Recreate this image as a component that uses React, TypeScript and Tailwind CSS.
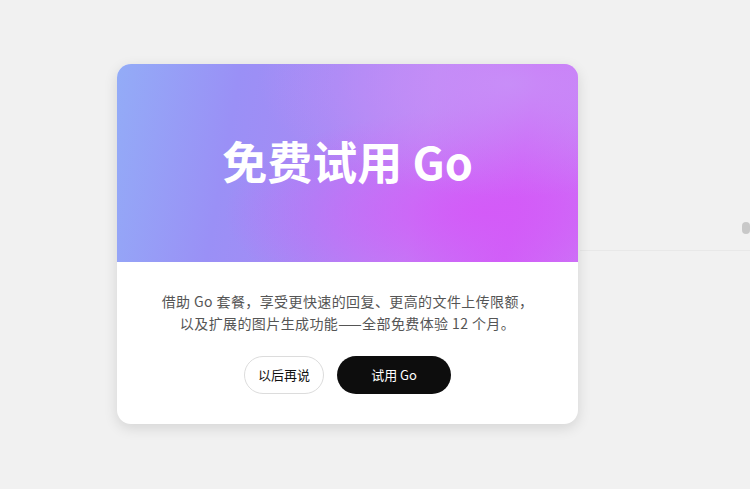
const App = () => {
  return (
    <div className="relative h-[489px] w-[750px] overflow-hidden bg-[#f1f1f1] font-['Noto_Sans_CJK_SC','Noto_Sans',sans-serif]">
      {/* faint backdrop behind the modal */}
      <div className="absolute left-[580px] top-[250px] h-px w-[170px] bg-[#e8e8e8]" />
      <div className="absolute left-[742px] top-[222px] h-[12px] w-[8px] rounded-full bg-[#c8c8c8]" />

      <div className="relative ml-[117px] mt-[64px] w-[461px] overflow-hidden rounded-[14px] bg-white shadow-[0_4px_14px_rgba(0,0,0,0.12)]">
        <div className="flex h-[198px] items-center justify-center bg-[radial-gradient(ellipse_at_85%_10%,rgba(200,145,248,0.9)_0%,rgba(200,145,248,0)_45%),radial-gradient(ellipse_at_80%_75%,rgba(212,90,248,0.95)_0%,rgba(212,90,248,0)_50%),linear-gradient(100deg,#93acf7_0%,#9a90f6_25%,#a78af5_45%,#bd86f5_65%,#cf62f8_85%,#c97cf6_100%)]">
          <h2 className="pb-1 text-[45px] font-bold text-white">
            免费试用 Go
          </h2>
        </div>
        <div className="flex flex-col items-center px-6 pb-[30px] pt-[28px]">
          <p className="text-center text-[14px] leading-[22px] tracking-[0.4px] text-[#555]">
            借助 Go 套餐，享受更快速的回复、更高的文件上传限额，
            <br />
            以及扩展的图片生成功能——全部免费体验 12 个月。
          </p>
          <div className="mt-[22px] flex gap-[13px]">
            <button className="h-[38px] w-[80px] rounded-full border border-[#dcdcdc] bg-white text-[13px] text-[#111]">
              以后再说
            </button>
            <button className="h-[38px] w-[114px] rounded-full bg-[#0d0d0d] text-[13px] text-white">
              试用 Go
            </button>
          </div>
        </div>
      </div>
    </div>
  );
};

export default App;
